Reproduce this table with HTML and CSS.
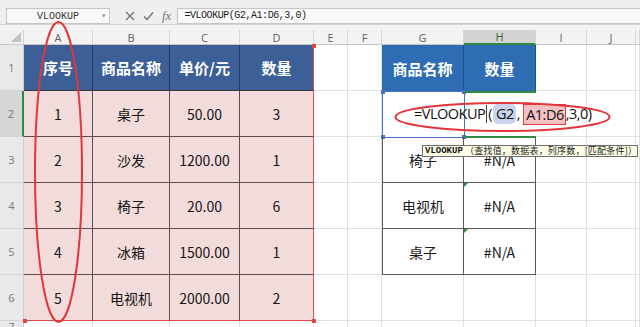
FILE: index.html
```html
<!DOCTYPE html>
<html lang="zh">
<head>
<meta charset="utf-8">
<link rel="stylesheet" href="styles.css">
</head>
<body>
<div class="app">
  <div class="toolbar">
    <div class="namebox"><span class="nb-text">VLOOKUP</span><span class="nb-arrow">▾</span></div>
    <div class="fx-icons">
      <svg class="ico-x" width="10" height="10" viewBox="0 0 10 10"><path d="M1 1L9 9M9 1L1 9" stroke="#6e6e6e" stroke-width="1.2" fill="none"/></svg>
      <svg class="ico-ok" width="11" height="10" viewBox="0 0 11 10"><path d="M1 5.5L4 8.5L10 1.5" stroke="#6e6e6e" stroke-width="1.2" fill="none"/></svg>
      <span class="ico-fx">fx</span>
    </div>
    <div class="formula-input">=VLOOKUP(G2,A1:D6,3,0)</div>
  </div>
  <div class="strip"></div>

  <div class="sheet">
    <div class="corner"><svg width="10" height="10" viewBox="0 0 10 10"><polygon points="0,10 10,10 10,0" fill="#c4c4c4"/></svg></div>
    <div class="colh">A</div>
    <div class="colh">B</div>
    <div class="colh">C</div>
    <div class="colh">D</div>
    <div class="colh">E</div>
    <div class="colh">F</div>
    <div class="colh">G</div>
    <div class="colh sel">H</div>
    <div class="colh">I</div>
    <div class="colh">J</div>
    <div class="colh"></div>

    <div class="ltable">
      <div class="lt-h">序号</div>
      <div class="lt-h">商品名称</div>
      <div class="lt-h">单价/元</div>
      <div class="lt-h lastc">数量</div>

      <div class="lt-d">1</div>
      <div class="lt-d">桌子</div>
      <div class="lt-d">50.00</div>
      <div class="lt-d lastc">3</div>

      <div class="lt-d">2</div>
      <div class="lt-d">沙发</div>
      <div class="lt-d">1200.00</div>
      <div class="lt-d lastc">1</div>

      <div class="lt-d">3</div>
      <div class="lt-d">椅子</div>
      <div class="lt-d">20.00</div>
      <div class="lt-d lastc">6</div>

      <div class="lt-d">4</div>
      <div class="lt-d">冰箱</div>
      <div class="lt-d">1500.00</div>
      <div class="lt-d lastc">1</div>

      <div class="lt-d lastr">5</div>
      <div class="lt-d lastr">电视机</div>
      <div class="lt-d lastr">2000.00</div>
      <div class="lt-d lastr lastc">2</div>

      <span class="handle h-tr"></span>
      <span class="handle h-br"></span>
      <span class="handle h-bl"></span>
    </div>

    <div class="rtable">
      <div class="rt-h first">商品名称</div>
      <div class="rt-h">数量</div>

      <div class="rt-edit">
        <span class="ref-g2"><i class="bh bh-tl"></i><i class="bh bh-tr"></i><i class="bh bh-bl"></i><i class="bh bh-br"></i></span>
        <span class="active-h2"></span>
        <span class="ftext">=VLOOKUP<span class="caret"></span>(<span class="chip-g2">G2</span>,<span class="chip-rng">A1:D6</span>,3,0)</span>
        <div class="tooltip"><b>VLOOKUP</b>&nbsp;（查找值，数据表，列序数，[匹配条件]）</div>
      </div>

      <div class="rt-d first">椅子</div>
      <div class="rt-d">#N/A</div>

      <div class="rt-d first">电视机</div>
      <div class="rt-d err">#N/A</div>

      <div class="rt-d first">桌子</div>
      <div class="rt-d err">#N/A</div>
    </div>

    <div class="rowh">1</div>
    <div class="c"></div><div class="c"></div><div class="c"></div><div class="c"></div><div class="c"></div>

    <div class="rowh sel">2</div>
    <div class="c"></div><div class="c"></div><div class="c"></div><div class="c"></div><div class="c"></div>

    <div class="rowh">3</div>
    <div class="c"></div><div class="c"></div><div class="c"></div><div class="c"></div><div class="c"></div>

    <div class="rowh">4</div>
    <div class="c"></div><div class="c"></div><div class="c"></div><div class="c"></div><div class="c"></div>

    <div class="rowh">5</div>
    <div class="c"></div><div class="c"></div><div class="c"></div><div class="c"></div><div class="c"></div>

    <div class="rowh">6</div>
    <div class="c"></div><div class="c"></div><div class="c"></div><div class="c"></div><div class="c"></div><div class="c"></div><div class="c"></div>

    <div class="rowh r7">7</div>
    <div class="c"></div><div class="c"></div><div class="c"></div><div class="c"></div><div class="c"></div><div class="c"></div><div class="c"></div><div class="c"></div><div class="c"></div><div class="c"></div><div class="c"></div>
  </div>

  <svg class="marks" width="640" height="327" viewBox="0 0 640 327">
    <ellipse cx="58.5" cy="172" rx="23.5" ry="150" fill="none" stroke="#e3363b" stroke-width="2"/>
    <ellipse cx="502.5" cy="117" rx="107" ry="14" fill="none" stroke="#e3363b" stroke-width="2"/>
  </svg>
</div>
</body>
</html>
```

FILE: styles.css
```css
* { box-sizing: border-box; margin: 0; padding: 0; }
html, body { width: 640px; height: 327px; overflow: hidden; background: #fff; }
body { font-family: "Noto Sans CJK SC", "Noto Sans", sans-serif; color: #111; }

.app { position: relative; width: 640px; height: 327px; overflow: hidden; }

/* ---------- toolbar ---------- */
.toolbar {
  height: 25px;
  background: #efefef;
  border-bottom: 1px solid #d4d4d4;
  padding-top: 8px;
  display: flex;
  align-items: flex-start;
}
.namebox {
  position: relative;
  margin-left: 6px;
  width: 104px;
  height: 16px;
  border: 1px solid #c6c6c6;
  background: #f8f8f8;
  display: flex;
  align-items: center;
  justify-content: center;
  font-family: "Liberation Mono", monospace;
  font-size: 10px;
  color: #333;
}
.nb-arrow { position: absolute; right: 3px; top: 2px; font-size: 8px; color: #8a8a8a; }
.fx-icons {
  height: 16px;
  display: flex;
  align-items: center;
  margin-left: 15px;
  gap: 8px;
}
.ico-fx {
  font-family: "Liberation Serif", serif;
  font-style: italic;
  font-size: 13px;
  color: #777;
  line-height: 16px;
}
.formula-input {
  flex: 1;
  margin-left: 6px;
  height: 16px;
  border: 1px solid #c6c6c6;
  border-right: none;
  background: #f9f9f9;
  padding-left: 6px;
  font-family: "Liberation Mono", monospace;
  font-size: 10px;
  letter-spacing: -0.45px;
  line-height: 14px;
  color: #222;
}
.strip { height: 5px; background: #f3f3f3; }

/* ---------- sheet grid ---------- */
.sheet {
  display: grid;
  grid-template-columns: 24px 69px 77px 70px 74px 34px 34px 82px 72px 51px 49px 4px;
  grid-template-rows: 15px repeat(7, 46px);
}
.corner {
  background: #f0f0f0;
  border-right: 1px solid #d2d2d2;
  border-bottom: 1px solid #c8c8c8;
  display: flex;
  align-items: flex-end;
  justify-content: flex-end;
  padding: 0 2px 2px 0;
}
.colh {
  background: #f3f3f3;
  border-right: 1px solid #d6d6d6;
  border-bottom: 1px solid #c6c6c6;
  font-family: "Open Sans", sans-serif;
  font-size: 11px;
  color: #5e5e5e;
  display: flex;
  align-items: center;
  justify-content: center;
  line-height: 1;
}
.colh.sel { background: #d3d3d3; border-bottom: 2px solid #2e8b3e; color: #2f6a34; }
.rowh {
  background: #e9e9e9;
  border-right: 1px solid #cdcdcd;
  border-bottom: 1px solid #d4d4d4;
  font-family: "Open Sans", sans-serif;
  font-size: 11px;
  color: #7a7a7a;
  display: flex;
  align-items: center;
  justify-content: center;
}
.rowh.sel { background: #d6d6d6; border-right: 2px solid #2e8b3e; }
.rowh.r7 { align-items: flex-start; line-height: 11px; }
.c { border-right: 1px solid #e1e1e1; border-bottom: 1px solid #e1e1e1; }

/* ---------- left table ---------- */
.ltable {
  grid-column: 2 / 6;
  grid-row: 2 / 8;
  position: relative;
  display: grid;
  grid-template-columns: 69px 77px 70px 74px;
  grid-template-rows: repeat(6, 46px);
}
.lt-h, .lt-d {
  display: flex;
  align-items: center;
  justify-content: center;
  border-right: 1px solid #5f4b4d;
  border-bottom: 1px solid #5f4b4d;
}
.lt-h {
  background: #3d5f98;
  color: #fff;
  font-weight: bold;
  font-size: 15px;
  border-right-color: #27395a;
  border-bottom-color: #3a3537;
}
.lt-d { background: #f2dcdb; font-size: 14px; color: #151515; }
.lastc { border-right-color: #e0474c; }
.lastr { border-bottom-color: #e0474c; }
.handle { position: absolute; width: 4px; height: 4px; background: #e0474c; }
.h-tr { right: -2px; top: -1px; }
.h-br { right: -2px; bottom: -2px; }
.h-bl { left: -1px; bottom: -2px; }

/* ---------- right table ---------- */
.rtable {
  grid-column: 8 / 10;
  grid-row: 2 / 7;
  display: grid;
  grid-template-columns: 82px 72px;
  grid-template-rows: repeat(5, 46px);
}
.rt-h, .rt-d {
  display: flex;
  align-items: center;
  justify-content: center;
}
.rt-h {
  background: #2e6db4;
  color: #fff;
  font-weight: bold;
  font-size: 15px;
  border-right: 1px solid #1f4f88;
}
.rt-d {
  position: relative;
  font-size: 14px;
  color: #1a1a1a;
  border-right: 1px solid #5a5a5a;
  border-bottom: 1px solid #5a5a5a;
}
.rt-d.first { border-left: 1px solid #5a5a5a; }
.rt-d.err::before {
  content: "";
  position: absolute;
  left: 0;
  top: 0;
  border-top: 4px solid #2f8a3a;
  border-right: 4px solid transparent;
}

.rt-edit {
  grid-column: 1 / 3;
  position: relative;
  background: #fff;
  display: flex;
  align-items: center;
  padding-left: 32px;
}
.ref-g2 {
  position: absolute;
  left: 0; top: 0;
  width: 83px; height: 47px;
  border: 1px solid #4a6ec6;
}
.bh { position: absolute; width: 4px; height: 4px; background: #4a6ec6; }
.bh-tl { left: -2px; top: -2px; }
.bh-tr { right: -2px; top: -2px; }
.bh-bl { left: -2px; bottom: -2px; }
.bh-br { right: -2px; bottom: -2px; }
.active-h2 {
  position: absolute;
  left: 83px; top: 0;
  width: 71px; height: 47px;
  border-top: 2px solid #2e8b3e;
  border-bottom: 2px solid #2e8b3e;
}
.ftext {
  position: relative;
  font-family: "Open Sans", "Noto Sans", sans-serif;
  font-size: 14.5px;
  letter-spacing: -0.5px;
  color: #111;
  display: flex;
  align-items: center;
  white-space: nowrap;
  line-height: 20px;
}
.caret { display: inline-block; width: 1px; height: 18px; background: #444; margin: 0 1px 0 1px; }
.chip-g2 {
  background: #c9d3ec;
  border-radius: 5px;
  padding: 0 2px 0 3px;
  margin: 0 1px 0 1px;
  line-height: 20px;
}
.chip-rng {
  background: #f3c1c3;
  border: 1.5px solid #e03a3f;
  padding: 0 1px 0 2px;
  margin-left: 3px;
  line-height: 19px;
}
.tooltip {
  position: absolute;
  left: 40px;
  top: 54px;
  width: 216px;
  height: 12px;
  background: #fdfde6;
  border: 1px solid #6e6e6e;
  display: flex;
  align-items: center;
  padding-left: 2px;
  white-space: nowrap;
  font-family: "Noto Sans CJK SC", sans-serif;
  font-size: 9px;
  line-height: 10px;
  letter-spacing: 0.2px;
  color: #222;
  z-index: 2;
}
.tooltip b {
  font-family: "Liberation Mono", monospace;
  font-size: 9px;
  font-weight: bold;
  letter-spacing: 0;
  color: #111;
}

/* ---------- annotations ---------- */
.marks { position: absolute; left: 0; top: 0; pointer-events: none; z-index: 5; }
```
